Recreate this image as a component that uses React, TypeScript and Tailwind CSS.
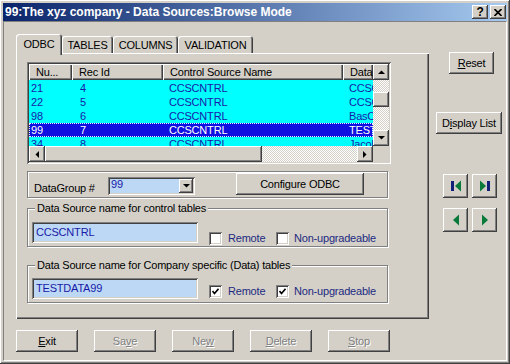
import React from "react";

const raised =
  "shadow-[inset_-1px_-1px_#404040,inset_1px_1px_#ffffff,inset_-2px_-2px_#808080,inset_2px_2px_#d4d0c8]";
const sunken =
  "shadow-[inset_1px_1px_#808080,inset_-1px_-1px_#ffffff,inset_2px_2px_#404040,inset_-2px_-2px_#d4d0c8]";
const etched = "border border-[#808080] shadow-[inset_1px_1px_#ffffff,1px_1px_#ffffff]";
const checker = "[background:repeating-conic-gradient(#ffffff_0%_25%,#d4d0c8_0%_50%)_0_0/2px_2px]";
const disabledText = "text-[#808080] [text-shadow:1px_1px_0_#ffffff]";

function Arrow({ dir }: { dir: "up" | "down" | "left" | "right" }) {
  const pts: Record<string, string> = {
    up: "0,4 7,4 3.5,0.5",
    down: "0,0 7,0 3.5,3.5",
    left: "4,0 4,7 0.5,3.5",
    right: "0,0 0,7 3.5,3.5",
  };
  const vert = dir === "up" || dir === "down";
  return (
    <svg width={vert ? 7 : 4} height={vert ? 4 : 7} viewBox={vert ? "0 0 7 4" : "0 0 4 7"}>
      <polygon points={pts[dir]} fill="#000000" />
    </svg>
  );
}

function NavIcon({ kind }: { kind: "first" | "last" | "prev" | "next" }) {
  const green = "#0a7a3a";
  const navy = "#10207a";
  if (kind === "first")
    return (
      <svg width="12" height="12" viewBox="0 0 12 12">
        <rect x="1" y="1" width="3" height="10" fill={navy} />
        <polygon points="11,0.5 11,11.5 5,6" fill={green} />
      </svg>
    );
  if (kind === "last")
    return (
      <svg width="12" height="12" viewBox="0 0 12 12">
        <polygon points="1,0.5 1,11.5 7,6" fill={green} />
        <rect x="8" y="1" width="3" height="10" fill={navy} />
      </svg>
    );
  if (kind === "prev")
    return (
      <svg width="8" height="12" viewBox="0 0 8 12">
        <polygon points="7,0.5 7,11.5 1,6" fill={green} />
      </svg>
    );
  return (
    <svg width="8" height="12" viewBox="0 0 8 12">
      <polygon points="1,0.5 1,11.5 7,6" fill={green} />
    </svg>
  );
}

function Check({ checked }: { checked: boolean }) {
  return (
    <div className={`w-[13px] h-[13px] bg-white ${sunken} flex items-center justify-center`}>
      {checked && (
        <svg width="7" height="7" viewBox="0 0 7 7">
          <polyline points="0.5,3 2.5,5.5 6.5,0.8" fill="none" stroke="#000" strokeWidth="1.6" />
        </svg>
      )}
    </div>
  );
}

const rows = [
  { n: "21", r: "4", c: "CCSCNTRL", d: "CCSCNTRL" },
  { n: "22", r: "5", c: "CCSCNTRL", d: "CCSCNTRL" },
  { n: "98", r: "6", c: "CCSCNTRL", d: "BasCNTRL" },
  { n: "99", r: "7", c: "CCSCNTRL", d: "TESTDATA", sel: true },
  { n: "34", r: "8", c: "CCSCNTRL", d: "Jacobs" },
];

function Grid() {
  const hdr = `h-[16px] bg-[#d4d0c8] shadow-[inset_1px_1px_#ffffff,inset_-1px_-1px_#404040,inset_-2px_-2px_#808080] text-black pl-[7px] leading-[16px] whitespace-nowrap overflow-hidden`;
  return (
    <div className={`w-[364px] h-[102px] bg-[#d4d0c8] p-[2px] ${sunken} flex`}>
      <div className="w-[344px] flex flex-col">
        <div className="flex h-[16px]">
          <div className={`w-[43px] ${hdr}`}>Nu...</div>
          <div className={`w-[91px] ${hdr}`}>Rec Id</div>
          <div className={`w-[180px] ${hdr}`}>Control Source Name</div>
          <div className={`w-[30px] ${hdr} pl-[6px]`}>Data</div>
        </div>
        <div className="h-[66px] overflow-hidden bg-[#00ffff] pt-[1px]">
          {rows.map((r) => (
            <div
              key={r.n}
              className={`flex h-[14px] leading-[14px] whitespace-nowrap ${
                r.sel
                  ? "bg-[#1010e0] text-white outline-1 outline-dotted outline-[#f0f0ff] -outline-offset-1"
                  : "text-[#1a1aa8]"
              }`}
            >
              <div className="w-[43px] pl-[2px] overflow-hidden">{r.n}</div>
              <div className="w-[91px] pl-[8px] overflow-hidden">{r.r}</div>
              <div className="w-[180px] pl-[6px] overflow-hidden">{r.c}</div>
              <div className="w-[30px] pl-[6px] overflow-hidden">{r.d}</div>
            </div>
          ))}
        </div>
        <div className="flex h-[16px]">
          <div className={`w-[16px] h-[16px] bg-[#d4d0c8] ${raised} flex items-center justify-center`}>
            <Arrow dir="left" />
          </div>
          <div className={`w-[217px] h-[16px] bg-[#d4d0c8] ${raised}`} />
          <div className={`w-[95px] h-[16px] ${checker}`} />
          <div className={`w-[16px] h-[16px] bg-[#d4d0c8] ${raised} flex items-center justify-center`}>
            <Arrow dir="right" />
          </div>
        </div>
      </div>
      <div className="w-[16px] flex flex-col">
        <div className={`h-[16px] bg-[#d4d0c8] ${raised} flex items-center justify-center`}>
          <Arrow dir="up" />
        </div>
        <div className={`h-[12px] ${checker}`} />
        <div className={`h-[15px] bg-[#d4d0c8] ${raised}`} />
        <div className={`h-[23px] ${checker}`} />
        <div className={`h-[16px] bg-[#d4d0c8] ${raised} flex items-center justify-center`}>
          <Arrow dir="down" />
        </div>
        <div className="h-[16px] bg-[#d4d0c8]" />
      </div>
    </div>
  );
}

function DataSourceGroup({
  title,
  value,
  checked,
  inputMt,
  checkMt,
  height,
}: {
  title: string;
  value: string;
  checked: boolean;
  inputMt: string;
  checkMt: string;
  height: string;
}) {
  return (
    <div className={`relative w-[361px] ${height} ${etched}`}>
      <div className="absolute left-[7px] top-[-8px] bg-[#d4d0c8] px-[2px] leading-[14px] text-black">{title}</div>
      <div className="flex pl-[4px]">
        <div
          className={`${inputMt} w-[166px] h-[21px] bg-[#bcd8f4] ${sunken} pl-[4px] pt-[3px] leading-[14px] text-[#1a1aa8]`}
        >
          {value}
        </div>
        <div className={`${checkMt} ml-[11px] flex items-center w-[67px]`}>
          <Check checked={checked} />
          <span className="ml-[6px] text-[#1c2a80] leading-[13px]">Remote</span>
        </div>
        <div className={`${checkMt} flex items-center`}>
          <Check checked={checked} />
          <span className="ml-[5px] text-[#1c2a80] leading-[13px]">Non-upgradeable</span>
        </div>
      </div>
    </div>
  );
}

function Btn({
  w,
  children,
  disabled,
  className = "",
}: {
  w: string;
  children: React.ReactNode;
  disabled?: boolean;
  className?: string;
}) {
  return (
    <div
      className={`${w} h-[22px] bg-[#d4d0c8] ${raised} flex items-center justify-center leading-[14px] ${
        disabled ? disabledText : "text-black"
      } ${className}`}
    >
      {children}
    </div>
  );
}

export default function App() {
  const tabBase =
    "bg-[#d4d0c8] rounded-t-[3px] shadow-[inset_1px_1px_#ffffff,inset_-1px_0_#404040,inset_-2px_0_#808080] flex justify-center text-black";
  return (
    <div
      className={`w-[510px] h-[364px] bg-[#d4d0c8] p-[3px] flex flex-col text-[11px] tracking-[-0.2px] font-['Liberation_Sans',Arial,sans-serif] ${raised} overflow-hidden`}
    >
      {/* title bar */}
      <div className="h-[18px] flex items-center bg-[linear-gradient(to_right,#0a246a,#a6caf0)] pl-[2px] pr-[1px]">
        <span className="flex-1 text-white font-bold text-[12px] tracking-normal leading-[16px] whitespace-nowrap">
          99:The xyz company - Data Sources:Browse Mode
        </span>
        <div
          className={`w-[16px] h-[14px] bg-[#d4d0c8] ${raised} flex items-center justify-center font-bold text-[12px] leading-[12px] text-black`}
        >
          ?
        </div>
        <div
          className={`ml-[2px] w-[16px] h-[14px] bg-[#d4d0c8] ${raised} flex items-center justify-center`}
        >
          <svg width="8" height="7" viewBox="0 0 8 7">
            <path d="M0.5,0 L7.5,7 M7.5,0 L0.5,7" stroke="#000" strokeWidth="1.6" />
          </svg>
        </div>
      </div>

      {/* body */}
      <div className="flex-1 flex border border-t-[#808080] border-l-[#808080] border-r-white border-b-white">
        {/* left column */}
        <div className="ml-[12px] mt-[12px] w-[413px] flex flex-col">
          <div className="h-[19px] flex items-end relative z-10">
            <div className={`w-[46px] h-[21px] -mb-[2px] ${tabBase} pt-[3px] leading-[14px]`}>ODBC</div>
            <div className={`w-[51px] h-[17px] ${tabBase} pt-[2px] leading-[14px]`}>TABLES</div>
            <div className={`w-[65px] h-[17px] ${tabBase} pt-[2px] leading-[14px]`}>COLUMNS</div>
            <div className={`w-[75px] h-[17px] ${tabBase} pt-[2px] leading-[14px]`}>VALIDATION</div>
          </div>
          <div
            className={`w-[413px] h-[266px] bg-[#d4d0c8] shadow-[inset_1px_1px_#ffffff,inset_-1px_-1px_#404040,inset_-2px_-2px_#808080] pl-[11px] pt-[9px] flex flex-col`}
          >
            <Grid />
            <div className={`mt-[7px] w-[361px] h-[27px] ${etched} flex items-start`}>
              <div className="mt-[9px] ml-[6px] w-[74px] leading-[14px] text-black">DataGroup #</div>
              <div className={`mt-[5px] w-[87px] h-[18px] bg-[#bcd8f4] ${sunken} flex`}>
                <span className="flex-1 pl-[3px] pt-[1px] leading-[12px] text-[#1a1aa8]">99</span>
                <div
                  className={`mt-[2px] mr-[2px] w-[14px] h-[14px] bg-[#d4d0c8] ${raised} flex items-center justify-center`}
                >
                  <Arrow dir="down" />
                </div>
              </div>
              <Btn w="w-[128px]" className="ml-[41px] mt-[1px] h-[20px]">
                Configure ODBC
              </Btn>
            </div>
            <div className="mt-[10px]">
              <DataSourceGroup
                title="Data Source name for control tables"
                value="CCSCNTRL"
                checked={false}
                inputMt="mt-[13px]"
                checkMt="mt-[23px]"
                height="h-[39px]"
              />
            </div>
            <div className="mt-[18px]">
              <DataSourceGroup
                title="Data Source name for Company specific (Data) tables"
                value="TESTDATA99"
                checked={true}
                inputMt="mt-[12px]"
                checkMt="mt-[18px]"
                height="h-[38px]"
              />
            </div>
          </div>
          <div className="mt-[11px] flex gap-[16px]">
            <Btn w="w-[62px]">
              <span className="underline">E</span>xit
            </Btn>
            <Btn w="w-[62px]" disabled>
              Sa<span className="underline">v</span>e
            </Btn>
            <Btn w="w-[62px]" disabled>
              Ne<span className="underline">w</span>
            </Btn>
            <Btn w="w-[62px]" disabled>
              <span className="underline">D</span>elete
            </Btn>
            <Btn w="w-[62px]" disabled>
              <span className="underline">S</span>top
            </Btn>
          </div>
        </div>

        {/* right column */}
        <div className="flex flex-col items-start">
          <Btn w="w-[45px]" className="mt-[30px] ml-[20px]">
            <span className="underline">R</span>eset
          </Btn>
          <Btn w="w-[66px]" className="mt-[38px] ml-[7px]">
            D<span className="underline">i</span>splay List
          </Btn>
          <div className="mt-[40px] ml-[14px] grid grid-cols-[25px_25px] gap-x-[4px] gap-y-[10px]">
            {(["first", "last", "prev", "next"] as const).map((k) => (
              <div
                key={k}
                className={`w-[25px] h-[24px] bg-[#d4d0c8] ${raised} flex items-center justify-center`}
              >
                <NavIcon kind={k} />
              </div>
            ))}
          </div>
        </div>
      </div>
    </div>
  );
}
